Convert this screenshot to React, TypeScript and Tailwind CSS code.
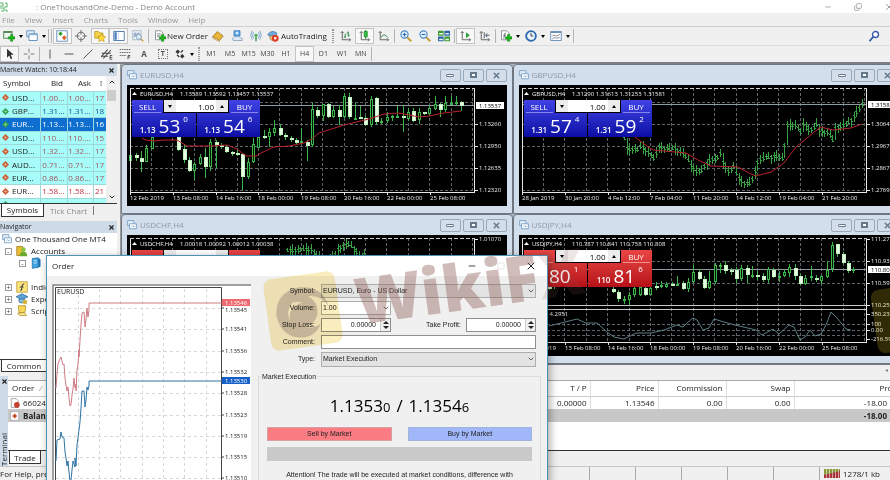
import type { ReactNode } from 'react';
import clsx from 'clsx';
import { ChevronDown, ChevronUp, Copy, Minus, Square, X } from 'lucide-react';

type Candle = [number, number, number, number, number, 0 | 1];
type Point = [number, number];

const CHART_FONT = '"Open Sans", sans-serif';

// [slot, high, body top, body bottom, low, bullish]
const EURUSD: Candle[] = [
  [0, 69, 70, 76, 77, 1], [1, 68, 70, 73, 76, 0], [2, 66, 73, 77, 87, 0], [3, 60, 63, 77, 77, 1],
  [4, 50, 52, 64, 64, 1], [9, 50, 52, 65, 66, 0], [10, 60, 64, 75, 78, 0], [11, 72, 75, 86, 87, 0],
  [12, 77, 79, 86, 95, 1], [13, 69, 72, 79, 80, 1], [14, 63, 72, 82, 93, 0], [15, 54, 57, 82, 86, 1],
  [16, 55, 57, 60, 83, 0], [17, 58, 60, 62, 64, 0], [18, 60, 62, 67, 68, 0], [19, 66, 67, 69, 71, 0],
  [20, 65, 68, 70, 71, 0], [21, 68, 69, 92, 105, 0], [22, 73, 77, 92, 94, 1], [23, 53, 59, 77, 78, 1],
  [24, 45, 52, 63, 63, 1], [25, 45, 51, 53, 54, 0], [26, 43, 47, 52, 62, 1], [27, 35, 43, 48, 51, 1],
  [28, 39, 43, 50, 51, 0], [29, 48, 50, 52, 55, 0], [30, 51, 53, 55, 57, 0], [31, 53, 55, 58, 60, 0],
  [32, 43, 56, 58, 59, 1], [33, 55, 57, 61, 76, 0], [34, 18, 24, 60, 62, 1], [35, 22, 25, 31, 33, 0],
  [36, 19, 19, 31, 36, 1], [37, 18, 19, 32, 33, 0], [38, 21, 25, 32, 33, 1], [39, 20, 25, 32, 40, 0],
  [40, 8, 11, 32, 33, 1], [41, 8, 12, 32, 34, 0], [42, 18, 33, 34, 34, 1], [43, 21, 32, 33, 33, 0],
  [44, 31, 33, 40, 41, 0], [45, 11, 14, 40, 42, 1], [46, 12, 13, 37, 40, 0], [47, 33, 36, 37, 39, 1],
  [48, 27, 32, 36, 38, 1], [49, 30, 31, 32, 36, 1], [50, 21, 31, 32, 33, 1], [51, 20, 31, 33, 47, 0],
  [52, 23, 27, 34, 36, 1], [53, 23, 26, 36, 37, 0], [54, 23, 27, 35, 39, 1], [55, 27, 27, 28, 30, 0],
  [56, 21, 23, 29, 30, 1], [57, 11, 19, 24, 25, 1], [58, 18, 19, 25, 32, 0], [59, 11, 18, 25, 27, 1],
  [60, 11, 18, 19, 20, 1], [61, 11, 17, 19, 21, 1], [62, 16, 17, 21, 26, 0],
];

const EURUSD_MA: Point[] = [
  [15, 53], [19, 55], [27, 56], [37, 55], [50, 55], [60, 61], [84, 61], [100, 60], [110, 64], [119, 71],
  [129, 71], [134, 68], [147, 62], [162, 61], [177, 58], [185, 54], [192, 48], [217, 40], [242, 34],
  [257, 29], [272, 28], [292, 32], [302, 31], [317, 28], [334, 26],
];

const GBPUSD_MID: Point[] = [
  [105, 53], [108, 64], [118, 64], [122, 60], [127, 66], [132, 69], [136, 76], [138, 60], [144, 63],
  [152, 64], [154, 62], [162, 67], [167, 72], [172, 80], [176, 86], [182, 86], [185, 81], [190, 75],
  [198, 73], [201, 68], [204, 78], [209, 86], [215, 81], [218, 91], [224, 98], [232, 98], [236, 85],
  [239, 75], [247, 72], [257, 71], [264, 73], [267, 40], [277, 40], [281, 48], [285, 36], [289, 45],
  [294, 44], [296, 36], [300, 45], [310, 48], [313, 56], [316, 43], [327, 39], [332, 35], [340, 23],
  [343, 19],
];

const GBPUSD_MA: Point[] = [
  [116, 52], [125, 59], [134, 65], [167, 68], [179, 75], [192, 81], [219, 82], [230, 88], [237, 91],
  [252, 87], [265, 78], [277, 62], [294, 48], [302, 42], [314, 45], [332, 43], [343, 39],
];

const USDCHF_MID: Point[] = [
  [160, 15], [184, 14], [190, 21], [198, 25], [206, 22], [212, 12], [222, 9], [228, 14], [232, 22], [240, 18],
];

const USDJPY: Candle[] = [
  [5, 49, 51, 54, 55, 0], [6, 49, 50, 52, 54, 1], [17, 50, 54, 57, 58, 0], [18, 55, 57, 64, 67, 0],
  [19, 61, 64, 65, 69, 1], [20, 57, 60, 65, 70, 1], [21, 52, 53, 60, 62, 1], [22, 52, 52, 60, 61, 1],
  [23, 52, 53, 60, 61, 0], [24, 50, 53, 60, 60, 1], [25, 47, 51, 52, 55, 0], [26, 46, 50, 51, 53, 1],
  [27, 47, 49, 52, 53, 1], [28, 47, 49, 50, 51, 0], [29, 41, 49, 50, 51, 1], [30, 46, 48, 54, 55, 0],
  [31, 43, 47, 54, 57, 1], [32, 30, 37, 47, 48, 1], [33, 34, 37, 44, 45, 0], [34, 41, 44, 53, 54, 0],
  [35, 36, 46, 53, 54, 1], [36, 28, 30, 47, 49, 1], [37, 28, 30, 31, 38, 1], [38, 26, 30, 36, 39, 0],
  [39, 33, 35, 36, 40, 0], [40, 32, 35, 44, 48, 0], [41, 30, 33, 44, 46, 1], [42, 30, 33, 40, 48, 0],
  [43, 31, 40, 41, 43, 1], [44, 36, 40, 41, 45, 0], [45, 38, 41, 45, 47, 0], [46, 32, 34, 45, 48, 1],
  [47, 33, 35, 42, 43, 0], [48, 36, 41, 43, 47, 1], [49, 35, 37, 41, 42, 1], [50, 29, 32, 38, 42, 1],
  [51, 29, 33, 41, 45, 0], [52, 39, 41, 49, 50, 0], [53, 40, 43, 49, 50, 1], [54, 31, 41, 42, 46, 1],
  [55, 40, 43, 45, 47, 0], [56, 41, 41, 46, 49, 1], [57, 26, 35, 42, 43, 1], [58, 7, 10, 34, 37, 1],
  [59, 9, 9, 19, 22, 0], [60, 17, 19, 28, 29, 0], [61, 26, 28, 36, 38, 0], [62, 32, 34, 35, 38, 1],
];

const USDJPY_OSC: Point[] = [
  [30, 91], [42, 88], [58, 84], [67, 88], [78, 88], [88, 97], [95, 102], [105, 104], [117, 98], [132, 98],
  [145, 95], [158, 90], [164, 92], [168, 88], [174, 83], [178, 85], [184, 95], [190, 93], [195, 84],
  [205, 87], [216, 90], [237, 95], [243, 100], [254, 94], [260, 99], [270, 90], [275, 92], [281, 105],
  [286, 102], [291, 95], [296, 101], [302, 99], [307, 90], [312, 77], [318, 83], [327, 94], [332, 95],
];

const TICK_ASK: Point[] = [
  [2, 98], [3, 84], [4, 74], [5, 71], [7, 67], [8, 71], [9, 75], [10, 74], [11, 88], [12, 95], [13, 101],
  [14, 97], [15, 108], [16, 116], [17, 115], [18, 105], [19, 99], [20, 88], [21, 98], [22, 94], [22, 101],
  [23, 80], [24, 74], [25, 60], [25, 67], [26, 50], [27, 35], [28, 23], [30, 22], [31, 37], [32, 29],
  [33, 18], [34, 27], [35, 20], [35, 13], [168, 13],
];

const TICK_BID: Point[] = [
  [2, 171], [3, 150], [6, 149], [7, 142], [8, 147], [10, 148], [11, 162], [12, 168], [13, 176], [14, 171],
  [15, 182], [16, 191], [17, 190], [18, 180], [19, 171], [21, 177], [21, 168], [22, 176], [23, 155],
  [24, 148], [25, 140], [26, 132], [27, 118], [28, 101], [30, 101], [31, 117], [32, 110], [33, 97],
  [34, 100], [35, 96], [35, 91], [168, 91],
];

const WATCH = [
  ['USD...', '1.00...', '1.00...', '17', 'down'],
  ['GBP...', '1.31...', '1.31...', '18', 'up'],
  ['EUR...', '1.13...', '1.13...', '16', 'selected'],
  ['USD...', '110....', '110....', '15', 'down'],
  ['USD...', '1.32...', '1.32...', '17', 'down'],
  ['AUD...', '0.71...', '0.71...', '17', 'down'],
  ['EUR...', '0.86...', '0.86...', '17', 'down'],
  ['EUR...', '1.58...', '1.58...', '21', 'white'],
  ['EUR...', '1.13...', '1.13...', '19', 'up'],
];

const toPath = (points: Point[]) => points.map((p) => p.join(',')).join(' ');

// Spread bars evenly along a mid line, with a repeating wobble for high and low.
// A bar always reaches back to the previous one, so a gap shows as one tall bar.
const toBars = (mid: Point[]) => {
  const bars: { x: number; y: number; hi: number; lo: number }[] = [];
  let prev = mid[0][1];
  for (let x = mid[0][0], n = 0; x <= mid[mid.length - 1][0]; x += 2.67, n++) {
    const k = Math.max(1, mid.findIndex((p) => p[0] >= x));
    const [x0, y0] = mid[k - 1];
    const [x1, y1] = mid[k];
    const y = Math.round(y0 + ((y1 - y0) * (x - x0)) / (x1 - x0));
    bars.push({
      x: Math.round(x),
      y,
      hi: Math.min(prev, y - 2 - ((n * 7) % 5)),
      lo: Math.max(prev, y + 2 + ((n * 11) % 6)),
    });
    prev = y;
  }
  return bars;
};

/* ---------- icons ---------- */

function Icon({ children, size = 'h-3 w-3' }: { children: ReactNode; size?: string }) {
  return (
    <svg viewBox="0 0 16 16" className={clsx('shrink-0', size)} fill="none" aria-hidden>
      {children}
    </svg>
  );
}

const Plus = () => <path d="M10 6h3v3h3v3h-3v3h-3v-3H7V9h3z" fill="#16b516" stroke="#087a08" strokeWidth=".6" />;
const Axes = () => <path d="M3 2v11h11M1 4l2-2 2 2M12 11l2 2-2 2" stroke="#666" strokeWidth="1.3" />;

const icons = {
  newChart: <Icon><path d="M1 2h11v9H1z" fill="#f2f8f2" stroke="#5b8a5b" strokeWidth="1.4" /><path d="M1 3h11" stroke="#5b8a5b" strokeWidth="2" /><Plus /></Icon>,
  profiles: <Icon><path d="M1 1h10v8H1z" fill="#e8f1fa" stroke="#6493bd" strokeWidth="1.3" /><path d="M4 5h11v9H4z" fill="#fff" stroke="#6493bd" strokeWidth="1.3" /><path d="M4 6h11" stroke="#8db5da" strokeWidth="2" /></Icon>,
  watch: <Icon><path d="M1 1h14v14H1z" fill="#fff" stroke="#729bc4" strokeWidth="1.4" /><path d="M3 5l3-3 3 3-3 3z" fill="#29a329" /><path d="M8 10l3-3 3 3-3 4z" fill="#d9622b" /></Icon>,
  target: <Icon><circle cx="8" cy="8" r="5" stroke="#777" strokeWidth="1.5" /><path d="M8 0v6M8 10v6M0 8h6M10 8h6" stroke="#777" strokeWidth="1.5" /></Icon>,
  star: <Icon><path d="M1 2h5l2 2h4v7H1z" fill="#f4d34c" stroke="#b58d1b" /><path d="M10 5l1.8 3.4 4 .5-3 2.6.8 4-3.6-2-3.6 2 .8-4-3-2.6 4-.5z" fill="#ffdc3a" stroke="#b98f12" strokeWidth=".8" /></Icon>,
  panel: <Icon><path d="M1 2h14v12H1z" fill="#fff" stroke="#557fae" strokeWidth="1.3" /><path d="M2 3h3v10H2z" fill="#477cc1" /><path d="M7 5h1M7 8h1M7 11h1" stroke="#557fae" /></Icon>,
  tester: <Icon><path d="M1 1h11v12H1z" fill="#f5f8fb" stroke="#8ea4b8" /><path d="M3 10V4M5 9V3M7 8V4M9 7V3" stroke="#557fae" /><circle cx="9" cy="9" r="3.5" fill="#d7ebfa" fillOpacity=".8" stroke="#7594b1" /><path d="M12 12l3 3" stroke="#c69c40" strokeWidth="2" /></Icon>,
  order: <Icon><path d="M2 1h7l3 3v9H2z" fill="#fff" stroke="#778" /><path d="M4 5h5M4 7h5M4 9h3" stroke="#778" /><Plus /></Icon>,
  book: <Icon><path d="M1 9l6-7 8 6-5 6z" fill="#e9b53a" stroke="#96701b" /><path d="M1 9l9 5v1.500L1 11z" fill="#fff3c4" stroke="#96701b" strokeWidth=".7" /></Icon>,
  cloud: <Icon><path d="M4 1h8v7H4z" fill="#5aa7e5" stroke="#2f74b8" /><circle cx="8" cy="4" r="2" fill="#d9eefc" /><path d="M3 14q-2-2 0-4 1-2 4-1 3-2 5 1 4 0 3 4z" fill="#dce9f4" stroke="#7e9ab5" /></Icon>,
  signal: <Icon><circle cx="8" cy="7" r="2" fill="#3fae3f" /><path d="M5 3q-3 4 0 8M11 3q3 4 0 8M3 1q-4 6 0 12M13 1q4 6 0 12" stroke="#6fa2cc" strokeWidth="1.2" /><path d="M8 9v6" stroke="#3f9f3f" strokeWidth="2" /></Icon>,
  auto: <Icon><path d="M1 6q5-7 12-2l-1 4H3z" fill="#6fa9dc" stroke="#416f9e" /><path d="M4 8h7v4q-4 4-7 0z" fill="#f3c78d" stroke="#a97a3a" /><circle cx="11" cy="11" r="4.500" fill="#e03a24" /><path d="M9.500 9.500h3v3h-3z" fill="#fff" /></Icon>,
  bars: <Icon><Axes /><path d="M7 5v6M5 9h2M11 2v7M9 4h2M11 7h2" stroke="#2c8a4b" strokeWidth="1.3" /></Icon>,
  candles: <Icon><Axes /><path d="M9 0v12" stroke="#11871c" strokeWidth="1.3" /><path d="M7 2h4v7H7z" fill="#33c23d" stroke="#11871c" /></Icon>,
  line: <Icon><Axes /><path d="M4 10q4-7 9 0" stroke="#2c8a4b" strokeWidth="1.3" /></Icon>,
  zoomIn: <Icon><path d="M9 9l6 6" stroke="#c99c37" strokeWidth="2.500" /><circle cx="6" cy="6" r="4.800" fill="#e3f1fd" stroke="#4c87c4" strokeWidth="1.500" /><path d="M6 3.500v5M3.500 6h5" stroke="#2a6bb8" strokeWidth="1.500" /></Icon>,
  zoomOut: <Icon><path d="M9 9l6 6" stroke="#c99c37" strokeWidth="2.500" /><circle cx="6" cy="6" r="4.800" fill="#e3f1fd" stroke="#4c87c4" strokeWidth="1.500" /><path d="M3.500 6h5" stroke="#2a6bb8" strokeWidth="1.500" /></Icon>,
  tile: <Icon><path d="M0 1h7.500v6.500H0zM8.500 8.500H16V15H8.500z" fill="#3d9b35" /><path d="M8.500 1H16v6.500H8.500zM0 8.500h7.500V15H0z" fill="#2e62a8" /><path d="M1.500 4h5v2h-5zM10 4h4.500v2H10zM1.500 11.500h5v2h-5zM10 11.500h4.500v2H10z" fill="#e8f3e4" /></Icon>,
  scroll: <Icon><Axes /><path d="M8 3l5 4-5 4z" fill="#25a03a" /></Icon>,
  shift: <Icon><Axes /><path d="M7 3v8M14 7H9m2-2.500L9 7l2 2.500" stroke="#4f5f73" strokeWidth="1.300" /></Icon>,
  indicator: <Icon><path d="M2 1h7l3 3v9H2z" fill="#fff" stroke="#778" /><path d="M4 11q2 0 2-4t2-3M4 7h4" stroke="#556" /><Plus /></Icon>,
  clock: <Icon><circle cx="8" cy="8" r="6.500" fill="#eaf4fd" stroke="#2868b0" strokeWidth="2.500" /><path d="M8 4v4h3" stroke="#444" strokeWidth="1.300" /></Icon>,
  template: <Icon><path d="M1 2h14v12H1z" fill="#fff" stroke="#6d94b8" strokeWidth="1.300" /><path d="M1 3h14" stroke="#6d94b8" strokeWidth="2" /><path d="M3 8l3-1 3 1 4-2M3 12l3-2 3 1 4-1" stroke="#667" /></Icon>,
  cursor: <Icon><path d="M4 1v12l3-3 2 5 2-1-2-5h4z" fill="#333" /></Icon>,
  cross: <Icon><path d="M8 1v5M8 10v5M1 8h5M10 8h5" stroke="#777" strokeWidth="1.300" /></Icon>,
  vline: <Icon><path d="M8 2v12" stroke="#555" strokeWidth="1.300" /></Icon>,
  hline: <Icon><path d="M2 8h12" stroke="#555" strokeWidth="1.300" /></Icon>,
  trend: <Icon><path d="M2 14L14 2" stroke="#555" strokeWidth="1.300" /></Icon>,
  channel: <Icon><path d="M0 12L9 2M3 14L13 3M1 7h12M0 11h9" stroke="#444" strokeWidth="1.400" /><path d="M15 10h-3v5h3M12 12.500h3" stroke="#333" /></Icon>,
  fibo: <Icon><path d="M1 2h14M1 6h14M1 10h9" stroke="#666" strokeWidth="1.300" strokeDasharray="2 1" /><path d="M12 15v-5h3M12 12h3" stroke="#333" /></Icon>,
  arrows: <Icon><path d="M2 5l3-3 3 3-3 3zM8 11l3-3 3 3-3 3z" fill="#333" /><path d="M4 9l3 3M9 6l3-3" stroke="#333" strokeWidth="1.500" /></Icon>,
  search: <Icon><path d="M2 15l5-6" stroke="#3659a8" strokeWidth="2.500" /><circle cx="10" cy="6" r="4" fill="#fff" stroke="#3659a8" strokeWidth="1.800" /></Icon>,
  chartWin: <Icon size="h-2.5 w-2.5"><path d="M1 1h10v8H1z" fill="#e7f0f8" stroke="#7ba3c8" strokeWidth="1.500" /><path d="M4 6h11v8H4z" fill="#fff" stroke="#7ba3c8" strokeWidth="1.500" /><path d="M7 11l2-2 2 2 2-2" stroke="#4d87b8" /></Icon>,
};

/* ---------- toolbar pieces ---------- */

function Tool({ label, children, pressed, menu }: { label: string; children: ReactNode; pressed?: boolean; menu?: boolean }) {
  return (
    <button
      type="button"
      aria-label={label}
      className={clsx(
        'flex h-4 flex-1 items-center justify-center gap-0.5 border',
        pressed ? 'border-[#c4c4c4] bg-[#f8f8f8]' : 'border-transparent',
      )}
    >
      {children}
      {menu && <span className="ml-0.5 border-x-2 border-t-[3px] border-x-transparent border-t-black" />}
    </button>
  );
}

const Sep = () => <span className="mx-px h-3.5 w-px shrink-0 bg-[#b4b4b4]" />;
const Grip = () => <span className="mx-0.5 h-3.5 w-[2px] shrink-0 border-x border-dotted border-[#999]" />;

function Toolbars() {
  return (
    <div className="shrink-0 border-b-2 border-[#7b7f84] bg-[#f0f0f0]">
      <div className="flex h-[18px] items-center">
        <div className="flex w-[47px] pl-px">
          <Tool label="New chart" menu>{icons.newChart}</Tool>
          <Tool label="Profiles" menu>{icons.profiles}</Tool>
        </div>
        <Sep />
        <Sep />
        <div className="flex w-[94px]">
          <Tool label="Market Watch" pressed>{icons.watch}</Tool>
          <Tool label="Data Window">{icons.target}</Tool>
          <Tool label="Navigator" pressed>{icons.star}</Tool>
          <Tool label="Terminal" pressed>{icons.panel}</Tool>
          <Tool label="Strategy Tester">{icons.tester}</Tool>
        </div>
        <Sep />
        <button type="button" className="flex h-4 w-[58px] items-center gap-px pl-1 whitespace-nowrap">
          {icons.order}
          New Order
        </button>
        <div className="flex w-[57px]">
          <Tool label="MetaEditor">{icons.book}</Tool>
          <Tool label="Community">{icons.cloud}</Tool>
          <Tool label="Signals">{icons.signal}</Tool>
        </div>
        <button type="button" className="flex h-4 w-[65px] items-center gap-0.5 pl-0.5 whitespace-nowrap">
          {icons.auto}
          AutoTrading
        </button>
        <Grip />
        <div className="flex w-[57px]">
          <Tool label="Bar chart">{icons.bars}</Tool>
          <Tool label="Candlesticks" pressed>{icons.candles}</Tool>
          <Tool label="Line chart">{icons.line}</Tool>
        </div>
        <Sep />
        <div className="flex w-[57px]">
          <Tool label="Zoom in">{icons.zoomIn}</Tool>
          <Tool label="Zoom out">{icons.zoomOut}</Tool>
          <Tool label="Tile windows">{icons.tile}</Tool>
        </div>
        <Sep />
        <div className="flex w-[38px]">
          <Tool label="Auto scroll" pressed>{icons.scroll}</Tool>
          <Tool label="Chart shift">{icons.shift}</Tool>
        </div>
        <Sep />
        <div className="flex w-[75px]">
          <Tool label="Indicators" menu>{icons.indicator}</Tool>
          <Tool label="Periods" menu>{icons.clock}</Tool>
          <Tool label="Templates" menu>{icons.template}</Tool>
        </div>
        <Sep />
        <button type="button" aria-label="Search" className="ml-auto pr-2.5">{icons.search}</button>
      </div>
      <div className="flex h-[17px] items-center border-t border-[#dcdcdc]">
        <div className="flex w-[38px]">
          <Tool label="Cursor" pressed>{icons.cursor}</Tool>
          <Tool label="Crosshair">{icons.cross}</Tool>
        </div>
        <Sep />
        <div className="flex w-[131px]">
          <Tool label="Vertical line">{icons.vline}</Tool>
          <Tool label="Horizontal line">{icons.hline}</Tool>
          <Tool label="Trend line">{icons.trend}</Tool>
          <Tool label="Channel">{icons.channel}</Tool>
          <Tool label="Fibonacci">{icons.fibo}</Tool>
          <Tool label="Text"><span className="font-bold text-[#555]">A</span></Tool>
          <Tool label="Text label"><span className="border border-dotted border-[#777] px-0.5 text-[7px]/[8px] font-bold text-[#555]">T</span></Tool>
        </div>
        <div className="flex w-6">
          <Tool label="Arrows" menu>{icons.arrows}</Tool>
        </div>
        <Grip />
        <div className="flex w-[168px] text-[7px] text-[#444]">
          {['M1', 'M5', 'M15', 'M30', 'H1', 'H4', 'D1', 'W1', 'MN'].map((tf) => (
            <Tool key={tf} label={tf} pressed={tf === 'H4'}>{tf}</Tool>
          ))}
        </div>
        <Sep />
      </div>
    </div>
  );
}

/* ---------- left column ---------- */

function PanelTitle({ children }: { children: ReactNode }) {
  return (
    <div className="flex h-3 shrink-0 items-center justify-between bg-[#cfdae8] pr-0.5 text-[7px] text-[#222]">
      {children}
      <button type="button" aria-label="Close panel"><X className="h-[7px] w-[7px]" strokeWidth={4} /></button>
    </div>
  );
}

function MarketWatch() {
  return (
    <section>
      <PanelTitle>Market Watch: 10:18:44</PanelTitle>
      <div className="flex h-32 overflow-hidden border-b border-[#333] bg-white">
        <table className="h-[135px] w-[107px] table-fixed border-collapse text-[8px]/[12px]">
          <thead>
            <tr className="h-[15px]">
              <th className="w-10 pl-[3px] text-left font-normal">Symbol</th>
              <th className="w-[27px] pr-1 text-right font-normal">Bid</th>
              <th className="w-[26px] pr-0.5 text-right font-normal">Ask</th>
              <th className="pr-1 text-right font-normal">!</th>
            </tr>
          </thead>
          <tbody>
            {WATCH.map(([symbol, bid, ask, spread, tone], i) => (
              <tr
                key={i}
                className={clsx(
                  'border-t border-[#9fd8d8]',
                  tone === 'selected' && 'bg-[#0f6fd0] text-white',
                  tone === 'white' && 'bg-white text-[#c0303c]',
                  tone === 'up' && 'bg-[#a6fcf8] text-[#1c4c9a]',
                  tone === 'down' && 'bg-[#a6fcf8] text-[#a3525e]',
                )}
              >
                <td className="p-0">
                  <span className={clsx('flex items-center gap-[3px] pl-0.5', tone !== 'selected' && 'text-[#222]')}>
                    <svg viewBox="0 0 8 8" className="h-[7px] w-[7px]" aria-hidden>
                      <path
                        d="M4 0l4 4-4 4-4-4z"
                        className={tone === 'up' || tone === 'selected' ? 'fill-[#2ba04a]' : 'fill-[#c65a2e]'}
                      />
                      <path d="M4 2v4M2 4h4" stroke="#fff" strokeOpacity=".4" />
                    </svg>
                    {symbol}
                  </span>
                </td>
                <td className="border-l border-[#9fd8d8] p-0 pr-0.5 text-right">{bid}</td>
                <td className="border-l border-[#9fd8d8] p-0 pr-0.5 text-right">{ask}</td>
                <td className="border-l border-[#9fd8d8] p-0 pr-0.5 text-right">{spread}</td>
              </tr>
            ))}
          </tbody>
        </table>
        <div className="flex w-[11px] flex-col items-center justify-between bg-[#f0f0f0] py-0.5">
          <div className="flex flex-col items-center gap-1">
            <ChevronUp className="h-2 w-2" strokeWidth={3} />
            <span className="h-[11px] w-[9px] bg-[#cdcdcd]" />
          </div>
          <ChevronDown className="h-2 w-2" strokeWidth={3} />
        </div>
      </div>
      <div className="flex h-[13px] text-[8px]/[12px]">
        <button type="button" className="ml-px w-[43px] border border-t-0 border-[#333] bg-white">Symbols</button>
        <button type="button" className="mx-1.5 text-[#8a8a8a]">Tick Chart</button>
        <span className="my-0.5 w-px bg-[#777]" />
      </div>
    </section>
  );
}

function TreeRow({ label, sign, depth, children }: { label: string; sign?: string; depth?: boolean; children: ReactNode }) {
  return (
    <li className={clsx('flex h-3 items-center gap-[3px] whitespace-nowrap', depth ? 'pl-[19px]' : sign ? 'pl-[5px]' : 'pl-0.5')}>
      {sign && (
        <span className="mr-px flex h-[7px] w-[7px] items-center justify-center border border-[#999] text-[7px]/[5px] text-[#444]">{sign}</span>
      )}
      {children}
      {label}
    </li>
  );
}

function Navigator() {
  return (
    <section className="mt-1 flex min-h-0 flex-1 flex-col">
      <PanelTitle>Navigator</PanelTitle>
      <ul className="flex-1 border-b border-[#333] bg-white">
        <TreeRow label="One Thousand One MT4">{icons.chartWin}</TreeRow>
        <TreeRow label="Accounts" sign="-">
          <Icon><path d="M1 2h8v12H1z" fill="#e9bd32" stroke="#98771b" /><circle cx="10" cy="6" r="3" fill="#86c440" /><path d="M5 15q0-6 5-6t5 6z" fill="#6aa92b" /></Icon>
        </TreeRow>
        <TreeRow label="" sign="-" depth>
          <Icon><path d="M3 2l8-1v13l-8 1z" fill="#3fa4e0" stroke="#1b6fa8" /><path d="M11 1l3 2v10l-3 1z" fill="#1b6fa8" /><path d="M5 5h4M5 8h4" stroke="#fff" /></Icon>
        </TreeRow>
        <li className="h-3" />
        <TreeRow label="Indicators" sign="+">
          <Icon><path d="M1 1h14v14H1z" fill="#fbe57c" stroke="#b9982d" /><path d="M6 13q2-1 2-5t3-4M5 8h5" stroke="#444" strokeWidth="1.500" /></Icon>
        </TreeRow>
        <TreeRow label="Expert Advisors" sign="+">
          <Icon><path d="M0 5l8-4 8 4-8 4z" fill="#5ba1d6" stroke="#336f9f" /><path d="M4 8v4q4 3 7 0V8z" fill="#86bce4" stroke="#336f9f" /><circle cx="12" cy="12" r="3" fill="#d8b23a" /></Icon>
        </TreeRow>
        <TreeRow label="Scripts" sign="+">
          <Icon><path d="M3 1h10l-1 9H4z" fill="#f7d75a" stroke="#b38b20" /><path d="M2 11l9-1 3 4H5z" fill="#fbe99a" stroke="#b38b20" /></Icon>
        </TreeRow>
      </ul>
      <div className="flex h-3 text-[8px]/[11px]">
        <button type="button" className="ml-px w-[46px] border border-t-0 border-[#333] bg-white">Common</button>
      </div>
    </section>
  );
}

/* ---------- charts ---------- */

type ChartProps = {
  title: string;
  quotes: string;
  prices: [string, number][];
  dates: string[];
  last?: [string, number];
  rows: number[];
  oscillator?: Point[];
  ma?: Point[];
  candles?: Candle[];
  bars?: Point[];
};

function Chart({ title, quotes, prices, dates, last, rows, oscillator, ma, candles, bars }: ChartProps) {
  return (
    <svg viewBox="0 0 379 121" preserveAspectRatio="xMinYMin meet" className="h-full w-full bg-black" role="img" aria-label={title}>
      <g stroke="#5f666b" strokeDasharray="3 2" strokeWidth="1" shapeRendering="crispEdges">
        {Array.from({ length: 16 }, (_, i) => (
          <path key={i} d={`M${24 + Math.round(i * 21.4)} 3V107`} />
        ))}
        {rows.map((y) => <path key={y} d={`M3 ${y}H348`} />)}
      </g>
      {last && <path d={`M3 ${last[1]}.5H348`} stroke="#8d9aa2" />}
      {candles?.map(([i, hi, top, bottom, lo, up]) => {
        const x = Math.round(3.3 + i * 5.34);
        return (
          <g key={i} stroke="#3cb54a" strokeWidth="1">
            <path d={`M${x + 0.5} ${hi}V${lo}`} />
            <rect
              x={x - 0.5}
              y={top + 0.5}
              width={up ? 2 : 3}
              height={Math.max(1, bottom - top - 1)}
              fill={up ? '#001800' : '#e9ffe6'}
              stroke={up ? '#3cb54a' : '#c4f2c0'}
            />
          </g>
        );
      })}
      {bars && (
        <g stroke="#38a344" strokeWidth="1">
          {toBars(bars).map(({ x, y, hi, lo }) => (
            <path key={x} d={`M${x + 0.5} ${hi}V${lo}M${x - 1} ${y - 0.5}h2M${x} ${y + 1.5}h2`} />
          ))}
        </g>
      )}
      {ma && <polyline points={toPath(ma)} fill="none" stroke="#b8232f" />}
      {oscillator && (
        <>
          <path d="M3 70.500H348M3 74.500H348" stroke="#c8c8c8" />
          <polyline points={toPath(oscillator)} fill="none" stroke="#5d7c86" />
        </>
      )}
      <path d="M3.500 3V107.500H348M347.500 3V107.500" stroke="#e6e6e6" fill="none" />
      <path d="M3 3.500H348" stroke="#cfcfcf" strokeDasharray="4 2" />
      <g fill="#f0f0f0" fontSize="6" fontFamily={CHART_FONT}>
        <path d="M5 10l2.500-3 2.500 3z" fill="#fff" />
        <text x="13" y="11">{title}</text>
        <text x="53" y="11">{quotes}</text>
        {prices.map(([label, y]) => (
          <g key={label}>
            <path d={`M348 ${y}.5h3`} stroke="#e6e6e6" />
            <text x="352" y={y + 2}>{label}</text>
          </g>
        ))}
        {dates.map((d, i) => (
          <g key={d}>
            <path d={`M${3.5 + Math.round(i * 42.8)} 107v3`} stroke="#e6e6e6" />
            <text x={3 + Math.round(i * 42.8)} y="115">{d}</text>
          </g>
        ))}
        {last && (
          <>
            <rect x="349" y={last[1] - 3} width="28" height="7" fill="#fff" />
            <text x="352" y={last[1] + 3} fill="#000">{last[0]}</text>
          </>
        )}
      </g>
    </svg>
  );
}

function OneClick({ id, base, sell, buy, red }: { id: string; base: string; sell: [string, string]; buy: [string, string]; red?: boolean }) {
  const side = clsx(
    'flex flex-1 flex-col bg-linear-to-b text-white',
    red ? 'from-[#ea4545] to-[#b50f17]' : 'from-[#4141e6] to-[#0c0ca4]',
  );
  const quote = ([big, small]: [string, string]) => (
    <span className="flex h-6 w-full items-end justify-center gap-[3px] pb-0.5">
      <span className="text-[8px]/[10px] font-semibold">{base}</span>
      <span className="text-[19px]/[18px]">{big}</span>
      <span className="self-start pt-0.5 text-[8px]/[8px]">{small}</span>
    </span>
  );
  return (
    <div className="absolute top-[15px] left-[5px] flex h-[37px] w-[128px] gap-px">
      <button type="button" className={clsx(side, 'items-start')}>
        <span className={clsx('ml-0.5 h-[13px] w-[27px] border-b text-center text-[8px]/[13px]', red ? 'border-[#f29090]' : 'border-[#8585f0]')}>SELL</span>
        {quote(sell)}
      </button>
      <button type="button" className={clsx(side, 'items-end')}>
        <span className={clsx('mr-0.5 h-[13px] w-[27px] border-b text-center text-[8px]/[13px]', red ? 'border-[#f29090]' : 'border-[#8585f0]')}>BUY</span>
        {quote(buy)}
      </button>
      <div className="absolute top-0 left-[31px] flex h-[13px] w-[66px] items-center border border-t-0 border-black bg-white">
        <button type="button" aria-label="Decrease volume" className="flex h-full w-3 items-center justify-center bg-[#ececec]">
          <span className="border-x-2 border-t-[3px] border-x-transparent border-t-black" />
        </button>
        <input id={id} aria-label="Volume" defaultValue="1.00" className="h-full w-full min-w-0 flex-1 pr-0.5 text-right text-[8px] text-black outline-none" />
        <button type="button" aria-label="Increase volume" className="flex h-full w-3 items-center justify-center bg-[#ececec]">
          <span className="border-x-2 border-b-[3px] border-x-transparent border-b-black" />
        </button>
      </div>
    </div>
  );
}

function ChartWindow({ title, children }: { title: string; children: ReactNode }) {
  const button = 'flex h-[13px] w-[21px] items-center justify-center rounded-[2px] border border-[#9aa9b9] bg-[#d3deea] text-[#66788c]';
  return (
    <section className="flex min-h-0 min-w-0 flex-col rounded-t-[4px] border border-[#6f7882] bg-[#d2deeb] px-[5px] pb-[7px]">
      <header className="flex h-5 shrink-0 items-center gap-[3px] text-[8px] text-[#8d99a6]">
        {icons.chartWin}
        <h2 className="mr-auto">{title}</h2>
        <div className="flex gap-0.5">
          <button type="button" aria-label="Minimize" className={button}><span className="h-[3px] w-2 rounded-[1px] border border-current bg-white" /></button>
          <button type="button" aria-label="Maximize" className={button}><span className="h-[6px] w-[7px] border-2 border-current bg-white" /></button>
          <button type="button" aria-label="Close" className={button}><X className="h-[9px] w-[9px]" strokeWidth={4} /></button>
        </div>
      </header>
      <div className="relative min-h-0 flex-1 overflow-hidden bg-black">{children}</div>
    </section>
  );
}

const FEB = ['12 Feb 2019', '13 Feb 08:00', '14 Feb 16:00', '18 Feb 00:00', '19 Feb 08:00', '20 Feb 16:00', '22 Feb 00:00', '25 Feb 08:00'];

function Workspace() {
  return (
    <div className="-mr-[14px] grid min-h-0 flex-1 grid-cols-2 grid-rows-2 bg-[#a9b3bd]">
      <ChartWindow title="EURUSD,H4">
        <Chart
          title="EURUSD,H4"
          quotes="1.13589 1.13592 1.13457 1.13537"
          rows={[17, 39, 61, 83, 105]}
          prices={[['1.13260', 39], ['1.12950', 61], ['1.12635', 83], ['1.12320', 105]]}
          dates={FEB}
          last={['1.13537', 20]}
          candles={EURUSD}
          ma={EURUSD_MA}
        />
        <OneClick id="vol-eur" base="1.13" sell={['53', '0']} buy={['54', '6']} />
      </ChartWindow>
      <ChartWindow title="GBPUSD,H4">
        <Chart
          title="GBPUSD,H4"
          quotes="1.31290 1.31613 1.31253 1.31581"
          rows={[17, 39, 61, 83, 105]}
          prices={[['1.30640', 39], ['1.29670', 61], ['1.28670', 83], ['1.27690', 105]]}
          dates={['28 Jan 2019', '30 Jan 20:00', '4 Feb 12:00', '7 Feb 04:00', '11 Feb 20:00', '14 Feb 12:00', '19 Feb 04:00', '21 Feb 20:00']}
          last={['1.31581', 19]}
          bars={GBPUSD_MID}
          ma={GBPUSD_MA}
        />
        <OneClick id="vol-gbp" base="1.31" sell={['57', '4']} buy={['59', '2']} />
      </ChartWindow>
      <ChartWindow title="USDCHF,H4">
        <Chart
          title="USDCHF,H4"
          quotes="1.00018 1.00092 1.00012 1.00038"
          rows={[26, 48, 70]}
          prices={[['1.01070', 4]]}
          dates={[]}
          bars={USDCHF_MID}
        />
        <OneClick id="vol-chf" base="1.00" sell={['03', '8']} buy={['05', '1']} red />
      </ChartWindow>
      <ChartWindow title="USDJPY,H4">
        <Chart
          title="USDJPY,H4"
          quotes="110.787 110.841 110.758 110.808"
          rows={[26, 48, 89, 95, 100]}
          prices={[['111.270', 4], ['110.930', 26], ['110.590', 48], ['110.250', 70], ['350.239', 79], ['100', 89], ['0.00', 95], ['-216.595', 104]]}
          dates={FEB}
          last={['110.808', 34]}
          candles={USDJPY}
          oscillator={USDJPY_OSC}
        />
        <OneClick id="vol-jpy" base="110" sell={['80', '1']} buy={['81', '6']} red />
        <span className="absolute top-[75px] left-[31px] text-[6px]/[8px] text-[#e8e8e8]">4.2951</span>
      </ChartWindow>
    </div>
  );
}

/* ---------- terminal ---------- */

function Terminal() {
  const cell = 'border-r border-[#ddd] p-0 pr-[3px] text-right';
  return (
    <section className="flex h-[91px] shrink-0 border-b border-[#c6c6c6]">
      <div className="flex w-2 flex-col items-center justify-between bg-[#cfdae8] pt-0.5 text-[8px]/[8px]">
        <button type="button" aria-label="Close terminal"><X className="h-[7px] w-[7px]" strokeWidth={4} /></button>
        <span className="rotate-180 [writing-mode:vertical-rl]">Terminal</span>
      </div>
      <div className="min-w-0 flex-1 pt-1">
        <div className="h-[71px] overflow-hidden border-t border-b border-t-[#aaa] border-b-[#333] bg-white">
          <table className="w-full table-fixed border-collapse text-[8px]/[12px]">
            <thead>
              <tr className="h-[15px]">
                <th className="p-0 pl-1 text-left font-normal">Order <span className="pl-1 text-[#888]">⁄</span></th>
                <th className={clsx(cell, 'w-[60px] font-normal')}>T / P</th>
                <th className={clsx(cell, 'w-[68px] font-normal')}>Price</th>
                <th className={clsx(cell, 'w-[68px] font-normal')}>Commission</th>
                <th className={clsx(cell, 'w-[68px] font-normal')}>Swap</th>
                <th className="w-24 overflow-hidden p-0 pl-[85px] text-left font-normal whitespace-nowrap">Profit</th>
              </tr>
            </thead>
            <tbody>
              <tr className="h-[13px] border-t border-[#ccc]">
                <td className="p-0 pl-0.5">
                  <span className="flex items-center gap-[3px]">
                    <Icon size="h-2.5 w-2.5"><path d="M2 1h8l3 3v11H2z" fill="#fff" stroke="#777" /><circle cx="11" cy="11" r="4.500" fill="#c6402c" /></Icon>
                    66024371
                  </span>
                </td>
                <td className={cell}>0.00000</td>
                <td className={cell}>1.13546</td>
                <td className={cell}>0.00</td>
                <td className={cell}>0.00</td>
                <td className="p-0 pr-[3px] text-right">-18.00</td>
              </tr>
              <tr className="h-[13px] bg-[#c8c8c8] font-bold">
                <td className="p-0 pl-0.5" colSpan={5}>
                  <span className="flex items-center gap-[3px]">
                    <Icon size="h-2.5 w-2.5"><path d="M1 1h13v14H1z" fill="#fff" stroke="#999" /><path d="M7.500 4l4 4-4 4-4-4z" fill="#c6522c" /></Icon>
                    Balance
                  </span>
                </td>
                <td className="p-0 pr-[3px] text-right">-18.00</td>
              </tr>
            </tbody>
          </table>
        </div>
        <button type="button" className="ml-px block h-[13px] w-8 border border-t-0 border-[#333] bg-white text-[8px]/[11px]">Trade</button>
      </div>
    </section>
  );
}

/* ---------- order dialog ---------- */

function TickChart() {
  const labels = ['1.13545', '1.13541', '1.13536', '1.13532', '1.13528', '1.13523', '1.13519', '1.13515', '1.13510'];
  return (
    <div className="w-[199px] shrink-0 border-t-2 border-l-2 border-[#a0a0a0] bg-white">
      <svg viewBox="0 0 197 195" className="h-[195px] w-[197px]" role="img" aria-label="EURUSD ticks">
        <g stroke="#d6d9dc" strokeDasharray="3 3" shapeRendering="crispEdges">
          {labels.map((l, i) => <path key={l} d={`M2 ${22 + Math.round(i * 21.3)}H168`} />)}
          {[24, 45, 66, 88, 109, 130, 152].map((x) => <path key={x} d={`M${x} 3V195`} />)}
        </g>
        <path d="M1.500 195V1.500H167.500V195" fill="none" stroke="#444" />
        <polyline points={toPath(TICK_ASK.map(([x, y]) => [x, y + 4]))} fill="none" stroke="#cf7b84" />
        <polyline points={toPath(TICK_BID.map(([x, y]) => [x, y + 4]))} fill="none" stroke="#2f74a5" />
        <g fontSize="6" fontFamily={CHART_FONT} fill="#222">
          <text x="3" y="8" fontSize="7">EURUSD</text>
          {labels.map((l, i) => (
            <g key={l}>
              <path d={`M168 ${22 + Math.round(i * 21.3)}h2`} stroke="#444" />
              <text x="171" y={(i === 0 ? 26 : 24) + Math.round(i * 21.3)}>{l}</text>
            </g>
          ))}
          <rect x="168" y="13" width="28" height="7" fill="#ee6a70" />
          <text x="171" y="19" fill="#fff">1.13546</text>
          <rect x="168" y="91" width="28" height="7" fill="#1560c8" />
          <text x="171" y="97" fill="#fff">1.13530</text>
        </g>
      </svg>
    </div>
  );
}

function Combo({ id, value, className }: { id: string; value: string; className: string }) {
  return (
    <span className={clsx('relative block', className)}>
      <select id={id} className="h-full w-full appearance-none border border-[#adadad] bg-inherit pl-px outline-none">
        <option>{value}</option>
      </select>
      <ChevronDown className="pointer-events-none absolute top-[3px] right-px h-2 w-2 text-[#444]" strokeWidth={2.5} />
    </span>
  );
}

function Spin({ id }: { id: string }) {
  return (
    <span className="flex h-[14px] w-[70px] border border-[#8f8f8f] bg-white">
      <input id={id} defaultValue="0.00000" className="w-full min-w-0 flex-1 pr-1 text-right outline-none" />
      <span className="flex w-2.5 flex-col items-center justify-evenly border-l border-[#ccc] bg-[#f0f0f0]">
        <button type="button" aria-label="Increase" className="border-x-[3px] border-b-[3px] border-x-transparent border-b-[#222]" />
        <button type="button" aria-label="Decrease" className="border-x-[3px] border-t-[3px] border-x-transparent border-t-[#222]" />
      </span>
    </span>
  );
}

function OrderDialog() {
  return (
    <div role="dialog" aria-label="Order" className="absolute top-[255px] left-[46px] flex h-80 w-[502px] flex-col border border-[#4a93b5] bg-[#f0f0f0] shadow-[2px_2px_8px_rgba(0,0,0,0.35)]">
      <header className="flex h-5 shrink-0 items-center bg-white pl-[5px] text-[8px]">
        <h2 className="mr-auto">Order</h2>
        <div className="flex w-[90px] items-center justify-around">
          <button type="button" aria-label="Minimize"><Minus className="h-2.5 w-2.5" strokeWidth={2} /></button>
          <button type="button" aria-label="Maximize" disabled><Square className="h-2 w-2 text-[#ddd]" /></button>
          <button type="button" aria-label="Close"><X className="h-3 w-3" strokeWidth={2} /></button>
        </div>
      </header>
      <div className="flex min-h-0 flex-1 gap-[7px] overflow-hidden pt-2 pr-[6px] pl-[5px] font-['Liberation_Sans'] text-[7px] text-[#1c1c1c]">
        <TickChart />
        <form className="min-w-0 flex-1">
          <div className="grid grid-cols-[57px_1fr] items-center gap-x-[6px] gap-y-[3px] pr-[5px]">
            <label htmlFor="symbol" className="text-right">Symbol:</label>
            <Combo id="symbol" value="EURUSD, Euro - US Dollar" className="h-[14px] bg-[#e3e3e3]" />
            <label htmlFor="volume" className="text-right">Volume:</label>
            <Combo id="volume" value="1.00" className="h-[14px] w-[70px] bg-white" />
            <label htmlFor="sl" className="text-right">Stop Loss:</label>
            <div className="flex items-center justify-between">
              <Spin id="sl" />
              <span className="flex items-center gap-[5px]">
                <label htmlFor="tp">Take Profit:</label>
                <Spin id="tp" />
              </span>
            </div>
            <label htmlFor="comment" className="text-right">Comment:</label>
            <input id="comment" className="h-[14px] border border-[#8f8f8f] bg-white outline-none" />
            <label htmlFor="type" className="text-right">Type:</label>
            <Combo id="type" value="Market Execution" className="h-[15px] bg-[#e3e3e3]" />
          </div>
          <fieldset className="mt-1 h-40 border border-[#dcdcdc] px-2">
            <legend className="-ml-1.5 px-px text-[7px]/[11px]">Market Execution</legend>
            <p className="mt-3 flex items-baseline justify-center font-['Open_Sans'] text-[17px]/[24px] text-black">
              1.1353<span className="text-[13px]">0</span>
              <span className="px-[6px]">/</span>
              1.1354<span className="text-[13px]">6</span>
            </p>
            <div className="mt-2 grid grid-cols-2 gap-4">
              <button type="button" className="h-[14px] border border-[#d5a0a4] bg-[#fb7c83]">Sell by Market</button>
              <button type="button" className="h-[14px] border border-[#a3b4dc] bg-[#a0b8fa]">Buy by Market</button>
            </div>
            <div className="mt-[6px] h-[14px] bg-[#c9c9c9]" />
            <p className="mt-2 text-center text-[7px]/[11px] whitespace-nowrap">
              Attention! The trade will be executed at market conditions, difference with
            </p>
          </fieldset>
        </form>
      </div>
    </div>
  );
}

function Watermark() {
  return (
    <div aria-hidden className="pointer-events-none absolute top-[250px] left-[264px] flex items-start">
      <svg viewBox="0 0 78 78" className="mt-[22px] h-[78px] w-[78px] -rotate-8 mix-blend-multiply">
        <rect x="3" y="3" width="72" height="72" rx="8" fill="#f3d66e" fillOpacity=".45" />
        <path d="M12 40Q14 17 38 15 62 16 65 38q-6-13-19-13 10 7 7 19-4 11-16 10 8 5 18 0-8 13-22 11Q14 62 12 40zM30 29q-9 8-5 19-2-14 15-18z" fill="#8a6d6d" fillOpacity=".35" fillRule="evenodd" />
      </svg>
      <span className="ml-3 -rotate-8 font-['Open_Sans'] text-[64px]/[70px] font-extrabold text-[#8a5a52]/40">
        WikiF<span className="text-[#8a5a52]/15">X</span>
      </span>
    </div>
  );
}

export default function App() {
  return (
    <div className="relative flex h-screen flex-col overflow-hidden bg-[#f0f0f0] font-['Open_Sans',sans-serif] text-[8px] text-[#222]">
      <header className="flex h-[13px] shrink-0 items-center bg-white text-[#888]">
        <svg viewBox="0 0 8 10" className="h-2.5 w-2" aria-hidden>
          <path d="M0 1h3v3H0M5 1h2v4H4M0 6h4v3H1M6 7v2h2" fill="none" stroke="#58b468" />
        </svg>
        <h1 className="mr-auto pl-7">: OneThousandOne-Demo - Demo Account</h1>
        <div className="-mr-1 flex items-center gap-[22px]">
          <button type="button" aria-label="Minimize"><Minus className="h-2 w-2" /></button>
          <button type="button" aria-label="Restore"><Copy className="h-2 w-2 -scale-y-100" /></button>
          <button type="button" aria-label="Close"><X className="h-2.5 w-2.5" /></button>
        </div>
      </header>
      <nav className="flex h-[14px] shrink-0 items-center gap-2.5 border-b border-[#cfcfcf] pl-0.5 text-[#999]">
        {['File', 'View', 'Insert', 'Charts', 'Tools', 'Window', 'Help'].map((m) => (
          <button key={m} type="button">{m}</button>
        ))}
      </nav>
      <Toolbars />
      <div className="flex min-h-0 flex-1">
        <aside className="flex w-[121px] shrink-0 flex-col border-r border-[#9a9a9a] pr-[3px] pb-1">
          <MarketWatch />
          <Navigator />
        </aside>
        <main className="flex min-w-0 flex-1 flex-col overflow-hidden">
          <Workspace />
          <div className="flex h-3 shrink-0 items-center justify-end border-t border-[#777] pr-0.5 text-[6px] text-[#888]">◂</div>
        </main>
      </div>
      <Terminal />
      <footer className="flex h-[13px] shrink-0 items-center whitespace-nowrap">
        <span className="mr-auto">For Help, press F1</span>
        {[1, 2, 3, 4, 5].map((n) => <span key={n} className="h-full w-[46px] border-l border-[#aaa]" />)}
        <span className="flex h-full w-[71px] items-center gap-[3px] border-l border-[#aaa] pl-1">
          <svg viewBox="0 0 16 9" className="h-[9px] w-4" aria-hidden>
            <path d="M0 0h16v9H0z" fill="#8a9a3a" />
            <path d="M0 6l16-4v7H0z" fill="#a8323a" />
            <path d="M2.500 0v9M5.500 0v9M8.500 0v9M11.500 0v9M14.500 0v9" stroke="#eee" strokeWidth=".6" />
          </svg>
          1278/1 kb
        </span>
      </footer>
      <OrderDialog />
      <Watermark />
      <span aria-hidden className="pointer-events-none absolute top-[286px] -right-12 h-16 w-16 -rotate-8 rounded-lg bg-[#f5d020]/20" />
    </div>
  );
}
